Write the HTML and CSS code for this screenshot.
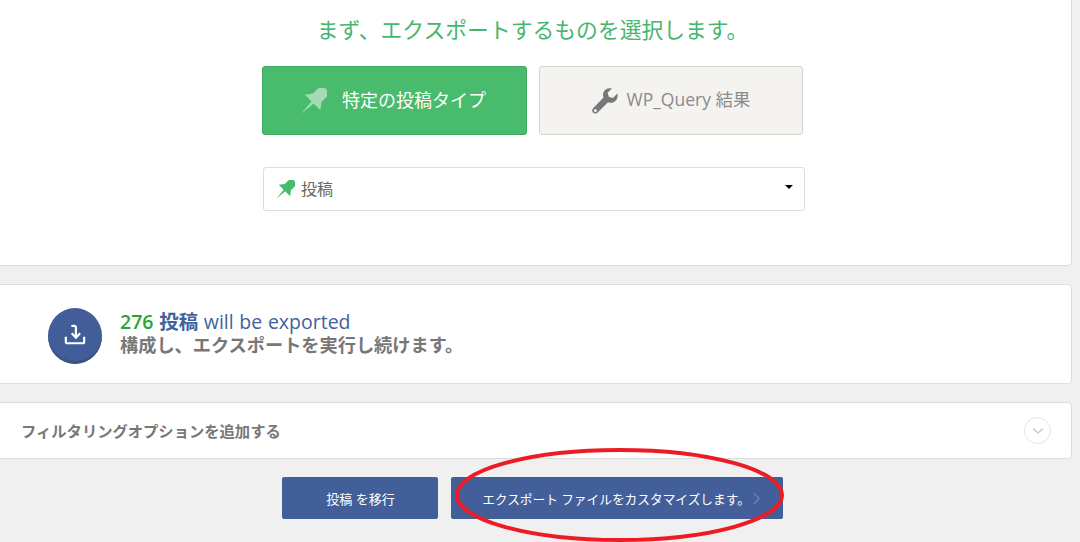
FILE: index.html
```html
<!DOCTYPE html>
<html lang="ja">
<head>
<meta charset="utf-8">
<title>エクスポート</title>
<link rel="stylesheet" href="styles.css">
</head>
<body>
<div class="page">
  <section class="panel panel-top">
    <h2 class="title">まず、エクスポートするものを選択します。</h2>
    <div class="choices">
      <div class="choice choice-active">
        <svg class="choice-icon pin-light" viewBox="0 0 26 26"><path transform="rotate(45 13 13)" d="M5-4H21V-.5L19-.5V8.5L24 15H14.5L13 31 11.5 15H2L7 8.5V-.5L5-.5Z"/></svg>
        <span class="choice-text">特定の投稿タイプ</span>
      </div>
      <div class="choice choice-idle">
        <svg class="choice-icon wrench" viewBox="0 0 26 26"><path fill-rule="evenodd" d="M25.4 5.6 21 10 16.8 8.8 15.6 4.8 20 0.5C16.6-.6 12.6 1 11.4 4.4 10.7 6.2 10.9 8 11.6 9.6L1.3 19.9C-.2 21.4-.1 23.4 1 24.6 2.3 25.9 4.4 25.9 5.7 24.6L16 14.3C17.8 15 19.8 15.1 21.6 14.2 24.8 12.8 26.3 9 25.4 5.6ZM3.4 24A1.5 1.5 0 1 1 3.4 21 1.5 1.5 0 0 1 3.4 24Z"/></svg>
        <span class="choice-text">WP_Query 結果</span>
      </div>
    </div>
    <div class="select">
      <svg class="select-pin" viewBox="0 0 26 26"><path transform="rotate(45 13 13)" d="M5-4H21V-.5L19-.5V8.5L24 15H14.5L13 31 11.5 15H2L7 8.5V-.5L5-.5Z"/></svg>
      <span class="select-text">投稿</span>
      <span class="select-caret"></span>
    </div>
  </section>

  <section class="panel panel-summary">
    <div class="badge">
      <svg viewBox="0 0 26 24" class="badge-icon"><path d="M9 2H12.2C13.6 2 14 3 14 4.2V14M9.4 10 14 15 18.6 10M3 14V19.4C3 20.4 3.6 21 4.6 21H21.4C22.4 21 23 20.4 23 19.4V14"/></svg>
    </div>
    <div class="summary-text">
      <div class="summary-main"><b class="count">276</b> <b>投稿</b> will be exported</div>
      <div class="summary-sub">構成し、エクスポートを実行し続けます。</div>
    </div>
  </section>

  <section class="panel panel-filter">
    <span class="filter-label">フィルタリングオプションを追加する</span>
    <span class="filter-toggle">
      <svg viewBox="0 0 12 8"><path d="M1 1.5 6 6 11 1.5"/></svg>
    </span>
  </section>

  <div class="actions">
    <a class="btn btn-back">投稿 を移行</a>
    <a class="btn btn-next">エクスポート ファイルをカスタマイズします。<svg class="chev" viewBox="0 0 8 14"><path d="M1 1 7 7 1 13"/></svg></a>
  </div>
</div>
<svg class="annotation" viewBox="0 0 1080 542"><ellipse cx="619.5" cy="495" rx="162.5" ry="45"/></svg>
</body>
</html>
```
FILE: styles.css
```css
* { box-sizing: border-box; }
html, body { margin: 0; padding: 0; height: 542px; overflow: hidden; }
body {
  background: #f0f0f0;
  font-family: "Open Sans", "Noto Sans CJK JP", sans-serif;
  position: relative;
  width: 1080px;
}
.page { margin: -10px 0 0 -16px; width: 1088px; }
.panel {
  background: #fff;
  border: 1px solid #ddd;
  border-radius: 4px;
}
.panel-top { height: 276px; padding-top: 23px; }
.title {
  margin: 0;
  padding-left: 9px;
  font-weight: 400;
  font-size: 21.8px;
  line-height: 32px;
  color: #46b56e;
  text-align: center;
}
.choices {
  display: flex;
  gap: 12px;
  margin: 20px 0 0 277px;
}
.choice {
  width: 265px;
  height: 69px;
  border-radius: 3px;
  display: flex;
  align-items: center;
  justify-content: center;
  font-size: 18px;
}
.choice-text { padding-bottom: 4px; }
.choice-active { background: #48bb6c; border: 1px solid #3fa862; color: #fff; gap: 15px; padding-right: 2px; }
.choice-idle { background: #f4f3ef; border: 1px solid #d5d3ce; color: #8b8b8b; gap: 9px; width: 264px; font-size: 17.5px; }
.choice-icon { width: 26px; height: 26px; flex: none; }
.pin-light { fill: #a3dcb4; }
.wrench { fill: #77787a; }
.select {
  margin: 32px 0 0 278px;
  width: 542px;
  height: 44px;
  border: 1px solid #ddd;
  border-radius: 3px;
  display: flex;
  align-items: center;
  padding: 0 12px;
  font-size: 16px;
  color: #666;
}
.select-pin { width: 19px; height: 19px; fill: #48bb6c; flex: none; margin-right: 6px; }
.select-text { flex: 1; padding-bottom: 2px; }
.select-caret {
  border-top: 4px solid #000;
  border-left: 4px solid transparent;
  border-right: 4px solid transparent;
  margin: 0 -1px 4px 0;
}
.panel-summary {
  margin-top: 18px;
  height: 100px;
  display: flex;
  align-items: center;
  padding-left: 63px;
  gap: 18px;
}
.badge {
  width: 54px;
  height: 56px;
  margin-top: 4px;
  border-radius: 50%;
  background: #415e98;
  box-shadow: inset 0 -3px 0 #3a5488;
  display: flex;
  align-items: center;
  justify-content: center;
}
.badge-icon { width: 24px; height: 22px; fill: none; stroke: #fff; stroke-width: 2.4; margin-bottom: 2px; }
.summary-text { margin-top: -2px; }
.summary-main { font-size: 19.5px; line-height: 25px; color: #41619c; word-spacing: 0.6px; }
.summary-main b { font-weight: 600; }
.summary-main .count { color: #2ea52a; }
.summary-sub { font-size: 18.2px; line-height: 23px; font-weight: 700; color: #777; }
.panel-filter {
  margin-top: 18px;
  height: 57px;
  display: flex;
  align-items: center;
  justify-content: space-between;
  padding: 0 20px 0 36px;
}
.filter-label { font-size: 15.3px; font-weight: 700; color: #777; padding-bottom: 2px; }
.filter-toggle {
  width: 27px;
  height: 27px;
  border: 1px solid #e4e4e4;
  border-radius: 50%;
  display: flex;
  align-items: center;
  justify-content: center;
}
.filter-toggle svg { width: 12px; height: 8px; fill: none; stroke: #ccc; stroke-width: 1.6; }
.actions {
  display: flex;
  gap: 13px;
  margin: 18px 0 0 298px;
}
.btn {
  height: 42px;
  background: #435f99;
  border-radius: 2px;
  color: #fff;
  font-size: 13px;
  display: flex;
  align-items: center;
  justify-content: center;
}
.btn-back { width: 156px; padding-left: 1px; }
.btn-next { width: 332px; padding-left: 8px; font-size: 12.7px; }
.chev { width: 7px; height: 13px; margin-left: 3px; fill: none; stroke: #6d84b4; stroke-width: 1.5; }
.annotation {
  position: absolute;
  left: 0;
  top: 0;
  width: 1080px;
  height: 542px;
  pointer-events: none;
}
.annotation ellipse { fill: none; stroke: #ed1c24; stroke-width: 4; }
```
